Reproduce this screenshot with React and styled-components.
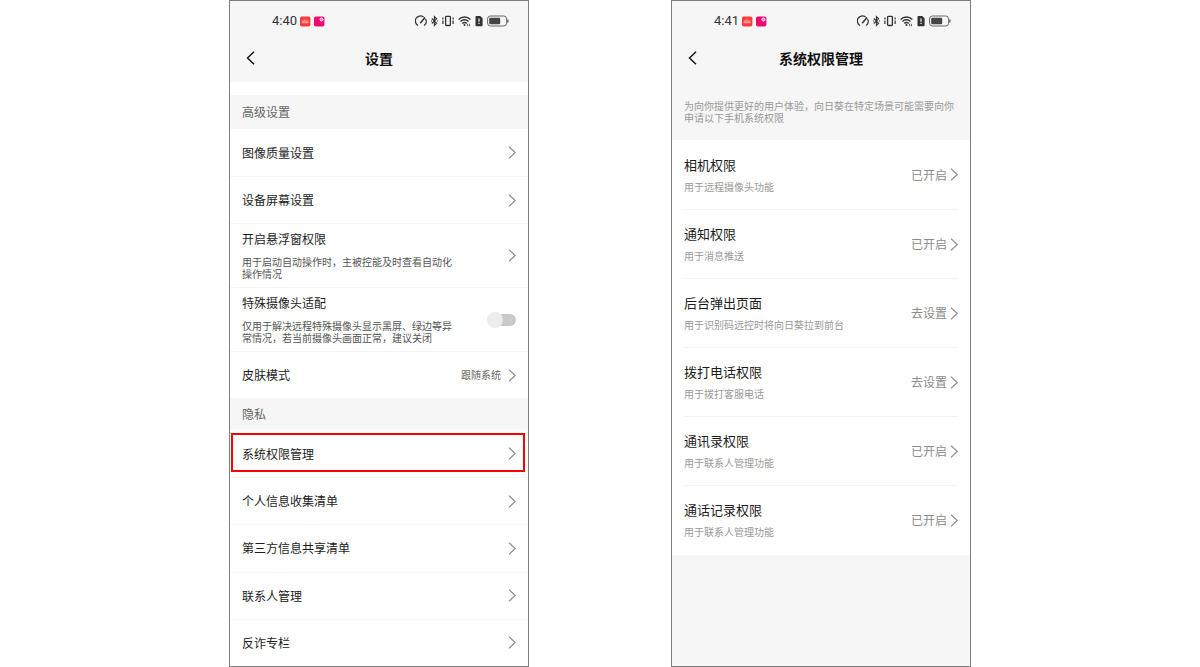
import React from "react";
import styled, { createGlobalStyle, css } from "styled-components";

const GlobalStyle = createGlobalStyle`
  *, *::before, *::after { box-sizing: border-box; }
  body {
    margin: 0;
    background: #fff;
    color: #1c1c1c;
    font-family: "Noto Sans CJK SC", "Noto Sans", sans-serif;
  }
  button {
    border: 0;
    background: none;
    padding: 0;
    color: inherit;
    font: inherit;
    text-align: left;
    cursor: pointer;
  }
  h1, h2, p { margin: 0; }
`;

const Page = styled.main`
  display: flex;
  justify-content: center;
  gap: 142px;
  min-height: 100vh;
`;

const Phone = styled.section`
  display: flex;
  flex-direction: column;
  flex: 0 0 25%;
  min-width: 296px;
  border: 1px solid #7b7d80;
  background: ${(p) => (p.$muted ? "#f6f6f6" : "#fff")};
`;

const Header = styled.header`
  padding-bottom: 7px;
  background: #f6f6f6;
`;

const StatusBar = styled.div`
  display: flex;
  align-items: center;
  justify-content: space-between;
  height: 40px;
  padding: 0 19px 0 42px;
  color: #333;
`;

const StatusGroup = styled.div`
  display: flex;
  align-items: center;
  gap: ${(p) => (p.$tight ? "3px" : "4px")};
`;

const Time = styled.span`
  font-family: Roboto, sans-serif;
  font-size: 13px;
  line-height: 16px;
`;

const NavBar = styled.div`
  display: grid;
  grid-template-columns: 40px 1fr 40px;
  align-items: center;
  height: 34px;
`;

const BackButton = styled.button`
  display: flex;
  align-items: center;
  height: 34px;
  padding-left: 16px;
`;

const Title = styled.h1`
  color: #111;
  font-size: 14px;
  font-weight: 700;
  line-height: 20px;
  text-align: center;
`;

const SectionTitle = styled.h2`
  margin-top: ${(p) => (p.$spaced ? "13px" : "0")};
  padding: ${(p) => (p.$spaced ? "9px 12px" : "8px 12px")};
  background: #f6f6f6;
  color: #666;
  font-size: 12px;
  font-weight: 400;
  line-height: 16px;
`;

const List = styled.div`
  display: flex;
  flex-direction: column;
  flex: ${(p) => (p.$fill ? "1" : "none")};
`;

const rowStyle = css`
  display: flex;
  align-items: center;
  gap: 7px;
  min-height: ${(p) => (p.$tall ? "64px" : "47px")};
  && { padding: 6px 12px; }
  &:not(:first-child) { border-top: 1px solid #f5f5f5; }
`;

const Row = styled.button`
  ${rowStyle}
  position: relative;
  flex: ${(p) => (p.$fill ? "1" : "none")};
`;

const SwitchRow = styled.label`
  ${rowStyle}
`;

const RowText = styled.span`
  flex: 1;
  display: flex;
  flex-direction: column;
  gap: 9px;
`;

const RowLabel = styled.span`
  font-size: 12px;
  line-height: 16px;
`;

const RowNote = styled.span`
  max-width: 216px;
  color: #555;
  font-size: 10px;
  line-height: 12px;
`;

const RowValue = styled.span`
  color: #666;
  font-size: 10px;
  line-height: 12px;
`;

const Highlight = styled.span`
  position: absolute;
  inset: 3px 3px 5px 1px;
  border: 2px solid #f00;
  pointer-events: none;
`;

const Switch = styled.input`
  appearance: none;
  display: flex;
  align-items: center;
  width: 28px;
  height: 12px;
  margin: 0;
  border-radius: 6px;
  background: #c9c9c9;
  &::before {
    content: "";
    flex: none;
    width: 16px;
    height: 16px;
    margin-left: -1px;
    border-radius: 50%;
    background: #ececec;
  }
  &:checked::before { margin-left: 12px; }
`;

const Intro = styled.p`
  padding: 18px 12px 16px;
  color: #999;
  font-size: 10px;
  line-height: 12px;
`;

const PermissionList = styled.div`
  display: flex;
  flex-direction: column;
  padding: 0 12px 1px;
  background: #fff;
`;

const PermissionRow = styled.button`
  display: flex;
  align-items: center;
  gap: 3px;
  height: 69px;
  & + & { border-top: 1px solid #f3f3f3; }
`;

const PermissionText = styled.span`
  flex: 1;
  display: flex;
  flex-direction: column;
  gap: 8px;
`;

const PermissionName = styled.span`
  font-size: 13px;
  line-height: 16px;
`;

const PermissionNote = styled.span`
  color: #999;
  font-size: 10px;
  line-height: 12px;
`;

const PermissionState = styled.span`
  color: #8c8c8c;
  font-size: 12px;
  line-height: 16px;
`;

const Chevron = () => (
  <svg width="8" height="13" viewBox="0 0 8 13" fill="none" stroke="#858585" strokeWidth="1.1" aria-hidden="true">
    <path d="M1 0.6 7.2 6.5 1 12.4" />
  </svg>
);

const BackIcon = () => (
  <svg width="9" height="14" viewBox="0 0 9 14" fill="none" stroke="#111" strokeWidth="1.4" aria-hidden="true">
    <path d="M8 0.8 1.5 7 8 13.2" />
  </svg>
);

const RedAppIcon = () => (
  <svg width="11" height="11" viewBox="0 0 11 11" aria-hidden="true">
    <rect y="0.4" width="10.4" height="10.2" rx="1.8" fill="#fb3b3b" />
    <path d="M1.8 5.1h6.8M1.8 6.7h6.8" stroke="#ffc4bd" strokeWidth="0.9" />
    <path d="M3.3 3.2h3.8" stroke="#fd7f78" strokeWidth="0.7" />
  </svg>
);

const PinkAppIcon = () => (
  <svg width="11" height="11" viewBox="0 0 11 11" aria-hidden="true">
    <rect y="0.4" width="10.4" height="10.2" rx="1.8" fill="#f00a6e" />
    <circle cx="7.5" cy="3.5" r="1.5" fill="#f76aa5" stroke="#fff" strokeWidth="1" />
  </svg>
);

const SpeedIcon = () => (
  <svg width="12" height="12" viewBox="0 0 12 12" fill="none" stroke="#333" strokeWidth="1.2" strokeLinecap="round" aria-hidden="true">
    <path d="M2.6 10.2A5 5 0 0 1 8.2 1.8M10.7 4.2A5 5 0 0 1 9.4 10.2" />
    <path d="M5.6 7.7 9.6 2.9" strokeWidth="1.5" />
  </svg>
);

const BluetoothIcon = () => (
  <svg width="7" height="12" viewBox="0 0 7 12" fill="none" stroke="#333" strokeWidth="1.1" aria-hidden="true">
    <path d="M0.8 3.5 5.6 8.2 3.4 10.5V1.5L5.6 3.8 0.8 8.5" />
    <path d="M0 6h1M6 6h1" />
  </svg>
);

const VibrateIcon = () => (
  <svg width="12" height="12" viewBox="0 0 12 12" fill="none" stroke="#333" aria-hidden="true">
    <rect x="3.6" y="1.3" width="4.8" height="9.2" rx="0.8" strokeWidth="1.3" />
    <path d="M0.9 2.6v2M0.9 5.4v3.6M11.1 2.6v2M11.1 5.4v3.6" strokeWidth="1.2" />
  </svg>
);

const WifiIcon = () => (
  <svg width="13" height="12" viewBox="0 0 13 12" fill="none" stroke="#333" strokeWidth="1.4" aria-hidden="true">
    <path d="M0.6 4.4a8.4 8.4 0 0 1 11.8 0M2.5 6.4a5.7 5.7 0 0 1 8 0M4.3 8.4a3.1 3.1 0 0 1 4.4 0" />
    <circle cx="6.5" cy="10.1" r="1" fill="#333" stroke="none" />
    <path d="M9.6 8.8v2.4M11.4 8.8v2.4" strokeWidth="0.8" />
  </svg>
);

const SimIcon = () => (
  <svg width="8" height="12" viewBox="0 0 8 12" aria-hidden="true">
    <path d="M1.4 1h3.8L7.6 3.2v7.1a.9.9 0 0 1-.9.9H1.4a.9.9 0 0 1-.9-.9V1.9A.9.9 0 0 1 1.4 1Z" fill="#333" />
    <path d="M4 3.4v3.4M4 7.8v1.3" stroke="#f6f6f6" strokeWidth="1.2" />
  </svg>
);

const BatteryIcon = () => (
  <svg width="22" height="12" viewBox="0 0 22 12" aria-hidden="true">
    <rect x="0.6" y="1" width="19" height="10" rx="2.8" fill="#f6f6f6" stroke="#666" strokeWidth="1" />
    <rect x="2.2" y="2.7" width="11" height="6.6" rx="1.2" fill="#444" />
    <path d="M20.9 4.5v3" stroke="#555" strokeWidth="1.2" />
  </svg>
);

function ScreenHeader({ time, title }) {
  return (
    <Header>
      <StatusBar>
        <StatusGroup $tight>
          <Time>{time}</Time>
          <RedAppIcon />
          <PinkAppIcon />
        </StatusGroup>
        <StatusGroup>
          <SpeedIcon />
          <BluetoothIcon />
          <VibrateIcon />
          <WifiIcon />
          <SimIcon />
          <BatteryIcon />
        </StatusGroup>
      </StatusBar>
      <NavBar>
        <BackButton type="button" aria-label="返回"><BackIcon /></BackButton>
        <Title>{title}</Title>
      </NavBar>
    </Header>
  );
}

function SettingRow({ label, note, value, highlighted, fill }) {
  return (
    <Row type="button" $fill={fill} $tall={Boolean(note)}>
      <RowText>
        <RowLabel>{label}</RowLabel>
        {note && <RowNote>{note}</RowNote>}
      </RowText>
      {value && <RowValue>{value}</RowValue>}
      <Chevron />
      {highlighted && <Highlight />}
    </Row>
  );
}

const privacyRows = ["系统权限管理", "个人信息收集清单", "第三方信息共享清单", "联系人管理", "反诈专栏"];

const permissions = [
  ["相机权限", "用于远程摄像头功能", "已开启"],
  ["通知权限", "用于消息推送", "已开启"],
  ["后台弹出页面", "用于识别码远控时将向日葵拉到前台", "去设置"],
  ["拨打电话权限", "用于拨打客服电话", "去设置"],
  ["通讯录权限", "用于联系人管理功能", "已开启"],
  ["通话记录权限", "用于联系人管理功能", "已开启"],
];

export default function App() {
  return (
    <>
      <GlobalStyle />
      <Page lang="zh-CN">
        <Phone>
          <ScreenHeader time="4:40" title="设置" />
          <SectionTitle $spaced>高级设置</SectionTitle>
          <List>
            <SettingRow label="图像质量设置" />
            <SettingRow label="设备屏幕设置" />
            <SettingRow
              label="开启悬浮窗权限"
              note="用于启动自动操作时，主被控能及时查看自动化操作情况"
            />
            <SwitchRow $tall>
              <RowText>
                <RowLabel>特殊摄像头适配</RowLabel>
                <RowNote>仅用于解决远程特殊摄像头显示黑屏、绿边等异常情况，若当前摄像头画面正常，建议关闭</RowNote>
              </RowText>
              <Switch type="checkbox" role="switch" />
            </SwitchRow>
            <SettingRow label="皮肤模式" value="跟随系统" />
          </List>
          <SectionTitle>隐私</SectionTitle>
          <List $fill>
            {privacyRows.map((label, i) => (
              <SettingRow key={label} label={label} highlighted={i === 0} fill />
            ))}
          </List>
        </Phone>

        <Phone $muted>
          <ScreenHeader time="4:41" title="系统权限管理" />
          <Intro>为向你提供更好的用户体验，向日葵在特定场景可能需要向你申请以下手机系统权限</Intro>
          <PermissionList>
            {permissions.map(([name, note, state]) => (
              <PermissionRow key={name} type="button">
                <PermissionText>
                  <PermissionName>{name}</PermissionName>
                  <PermissionNote>{note}</PermissionNote>
                </PermissionText>
                <PermissionState>{state}</PermissionState>
                <Chevron />
              </PermissionRow>
            ))}
          </PermissionList>
        </Phone>
      </Page>
    </>
  );
}
